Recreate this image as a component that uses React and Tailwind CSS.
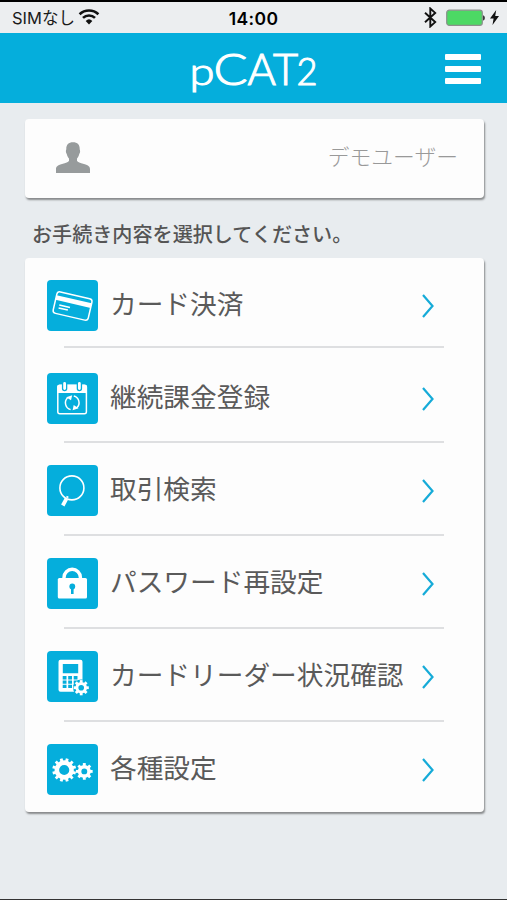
import { Fragment } from 'react'

const bigTeeth = [15, 45, 75, 105, 135, 165, 195, 225, 255, 285, 315, 345]
const smallTeeth = [0, 45, 90, 135, 180, 225, 270, 315]

function Gear({ cx, cy, r, width, teeth, toothWidth, toothLength }) {
  return (
    <g transform={`translate(${cx} ${cy})`}>
      <circle r={r} fill="none" stroke="#fff" strokeWidth={width} />
      {teeth.map((angle) => (
        <rect
          key={angle}
          x={-toothWidth / 2}
          y={-(r + width / 2 + toothLength)}
          width={toothWidth}
          height={toothLength + 0.8}
          fill="#fff"
          transform={`rotate(${angle})`}
        />
      ))}
    </g>
  )
}

function CardIcon() {
  return (
    <g transform="rotate(13 25.5 25.5)">
      <rect x="7.7" y="15" width="36" height="22" rx="3" fill="none" stroke="#fff" strokeWidth="1.5" />
      <path d="M7.7 19h36v4.8h-36z" fill="#fff" />
      <path d="M12.5 28h11M12.5 31h9.5" stroke="#fff" strokeWidth="1.5" />
    </g>
  )
}

function CalendarIcon() {
  return (
    <>
      <rect x="10.8" y="12.3" width="28.6" height="28.4" rx="2" fill="none" stroke="#fff" strokeWidth="1.5" />
      <path d="M10.2 14a2.3 2.3 0 0 1 2.3-2.3h25.2A2.3 2.3 0 0 1 40 14v6H10.2z" fill="#fff" />
      <path d="M17.6 11v4.6M32.4 11v4.6" stroke="#05aedc" strokeWidth="5.4" strokeLinecap="round" />
      <path d="M17.6 10.5v5M32.4 10.5v5" stroke="#fff" strokeWidth="2.8" strokeLinecap="round" />
      <path d="M23.6 36.6a7 7 0 0 1-3-11.8M26.8 22.9a7 7 0 0 1 3.2 11.7" fill="none" stroke="#fff" strokeWidth="1.5" />
      <path d="M19.2 24.2l6-2-1.2 5zM31.6 35.2l-6 2 1.1-5.1z" fill="#fff" />
    </>
  )
}

function SearchIcon() {
  return (
    <>
      <circle cx="24.9" cy="22.9" r="12" fill="none" stroke="#fff" strokeWidth="1.6" />
      <path d="M19.4 33.8l-3.6 6.7" stroke="#fff" strokeWidth="3.8" />
      <path d="M20 32.7l.8-1.5" stroke="#fff" strokeWidth="2.2" />
    </>
  )
}

function LockIcon() {
  return (
    <>
      <path d="M17 21v-1.5a8.2 8.2 0 0 1 16.4 0V21" fill="none" stroke="#fff" strokeWidth="3.4" />
      <rect x="10.8" y="20" width="29.2" height="20.6" rx="1.6" fill="#fff" />
      <circle cx="25.3" cy="28.5" r="2.9" fill="#05aedc" />
      <path d="M25.3 29v7" stroke="#05aedc" strokeWidth="2.6" />
    </>
  )
}

function ReaderIcon() {
  return (
    <>
      <path
        fillRule="evenodd"
        d="M13.5 8.8h20a2 2 0 0 1 2 2v30h-22a2 2 0 0 1-2-2v-28a2 2 0 0 1 2-2zM15.8 13v9.2h15.4V13z"
        fill="#fff"
      />
      {[25.1, 29.4, 33.7].map((y) => (
        <path key={y} d={`M15.7 ${y}h3.8v3.3h-3.8zM21.2 ${y}h3.8v3.3h-3.8zM26.7 ${y}h3.8v3.3h-3.8z`} fill="#05aedc" />
      ))}
      <circle cx="34.2" cy="36.7" r="8.2" fill="#05aedc" />
      <Gear cx={34.2} cy={36.7} r={4.3} width={3} teeth={smallTeeth} toothWidth={2.8} toothLength={1.8} />
    </>
  )
}

function SettingsIcon() {
  return (
    <>
      <Gear cx={17.2} cy={26} r={7.4} width={4.6} teeth={bigTeeth} toothWidth={2.9} toothLength={2.2} />
      <Gear cx={37.3} cy={27.4} r={4.7} width={3.5} teeth={smallTeeth} toothWidth={2.9} toothLength={1.9} />
    </>
  )
}

const menu = [
  { label: 'カード決済', Icon: CardIcon, line: 'mt-[15px] mb-[25px]' },
  { label: '継続課金登録', Icon: CalendarIcon, line: 'mt-[17px] mb-[22px]' },
  { label: '取引検索', Icon: SearchIcon, line: 'mt-[18px] mb-[22px]' },
  { label: 'パスワード再設定', Icon: LockIcon, line: 'mt-[18px] mb-[22px]' },
  { label: 'カードリーダー状況確認', Icon: ReaderIcon, line: 'mt-[18px] mb-[22px]' },
  { label: '各種設定', Icon: SettingsIcon },
]

function StatusBar() {
  return (
    <div className="grid h-[33px] grid-cols-3 items-center border-t-2 border-black bg-[#eceef0] pr-2 pl-3 text-[#1a1a1a]">
      <div className="flex items-center gap-[3px] pt-px">
        <span className="text-[16.5px] leading-none whitespace-nowrap">
          <span className="font-['Inter']">SIM</span>なし
        </span>
        <svg width="22" height="17" viewBox="0 0 22 17" className="-mt-1">
          <path d="M1.6 6.3a13.5 13.5 0 0 1 18.8 0M5 9.9a8.6 8.6 0 0 1 12 0" fill="none" stroke="#111" strokeWidth="2.6" />
          <path d="M11 16.4l-3.3-3.5a4.8 4.8 0 0 1 6.6 0z" fill="#111" />
        </svg>
      </div>
      <div className="-ml-1 pt-[3px] text-center font-['Inter'] text-[17.5px] leading-none font-semibold tracking-[0.4px] text-black">
        14:00
      </div>
      <div className="flex items-center justify-end">
        <svg width="13" height="21" viewBox="0 0 13 21" className="mr-[9px]">
          <path d="M1 5.8l10.2 9.3L6.3 19.5V1.5l4.9 4.4L1 15.2" fill="none" stroke="#111" strokeWidth="1.9" />
        </svg>
        <svg width="40" height="18" viewBox="0 0 40 18">
          <rect x=".7" y="1.2" width="35.6" height="15.2" rx="2.6" fill="#4cd964" stroke="#8b908c" strokeWidth="1.2" />
          <path d="M37.2 6.2c2 .6 2 4.8 0 5.4z" fill="#111" />
        </svg>
        <svg width="9" height="15" viewBox="0 0 9 15" className="ml-[4px]">
          <path d="M6.2 0L0 8.5h3.6L2.5 15 9 6H5.2z" fill="#111" />
        </svg>
      </div>
    </div>
  )
}

function Header() {
  return (
    <header className="flex h-[70px] items-center justify-between bg-[#05aedc] pr-[26px] pl-[185px]">
      <svg
        width="140"
        height="66"
        viewBox="0 0 140 66"
        className="font-['Lato'] font-light"
        fill="#fff"
        stroke="#fff"
        strokeWidth="1.1"
      >
        <text x="4.5" y="49.5" fontSize="38" textLength="25" lengthAdjust="spacingAndGlyphs">p</text>
        <text x="28.5" y="49.5" fontSize="43.5" textLength="34" lengthAdjust="spacingAndGlyphs">C</text>
        <text x="62.5" y="49.5" fontSize="43.5" textLength="50.5" lengthAdjust="spacingAndGlyphs">AT</text>
        <text x="111.5" y="49.5" fontSize="38" textLength="21" lengthAdjust="spacingAndGlyphs">2</text>
      </svg>
      <div className="mt-px flex flex-col gap-[6px]">
        <div className="h-[6px] w-9 rounded-[1px] bg-white" />
        <div className="h-[6px] w-9 rounded-[1px] bg-white" />
        <div className="h-[6px] w-9 rounded-[1px] bg-white" />
      </div>
    </header>
  )
}

function App() {
  return (
    <div className="h-[900px] w-[507px] overflow-hidden border-b border-[#333] bg-[#e8ecef] font-['Noto_Sans_CJK_JP',sans-serif]">
      <StatusBar />
      <Header />

      <main className="pr-[23px] pl-[25px]">
        <div className="mt-4 flex h-[79px] items-center justify-between rounded-[4px] bg-[#fdfdfd] pr-[26px] pl-[31px] shadow-[1px_2px_2px_rgba(0,0,0,0.42)]">
          <svg width="34" height="31" viewBox="0 0 34 31" className="-mt-0.5">
            <path
              d="M17 .2c4.500 0 6.800 2.600 6.700 6.700 0 1 .5 1.100.4 2.700-.1 1.500-.7 1.900-1 2.900-.4 1.900-1.200 3-2.100 4v2.200c.7 1.500 3 2 7 3.300 4.600 1.400 6 2.700 6 5.200V31H0v-3.800c0-2.500 1.400-3.800 6-5.200 4-1.300 6.300-1.800 7-3.300v-2.200c-.9-1-1.700-2.100-2.100-4-.3-1-.9-1.400-1-2.900-.1-1.600.4-1.700.4-2.700C10.200 2.800 12.500.2 17 .2z"
              fill="#979b9c"
            />
          </svg>
          <span className="pb-[5px] text-[21.8px] leading-none font-light text-[#999]">デモユーザー</span>
        </div>

        <h1 className="mt-[25px] ml-[7px] h-[35px] text-[20.1px] leading-[22px] font-medium whitespace-nowrap text-[#555]">
          お手続き内容を選択してください。
        </h1>

        <div className="h-[554px] rounded-[4px] bg-[#fdfdfd] pt-[22px] pl-[22px] shadow-[1px_2px_2px_rgba(0,0,0,0.42)]">
          {menu.map(({ label, Icon, line }) => (
            <Fragment key={label}>
              <div className="flex h-[51px] items-center">
                <svg width="51" height="51" viewBox="0 0 51 51" className="shrink-0 rounded-[4px] bg-[#05aedc]">
                  <Icon />
                </svg>
                <span className="ml-3 flex-1 pb-[5px] text-[26.7px] leading-none whitespace-nowrap text-[#5a5a5a]">
                  {label}
                </span>
                <svg width="12" height="24" viewBox="0 0 12 24" className="mr-[50px]">
                  <path d="M1 1l9.5 11L1 23" fill="none" stroke="#16abd8" strokeWidth="2.2" />
                </svg>
              </div>
              {line && <div className={`ml-[17px] h-[2px] w-[380px] bg-[#dedfe1] ${line}`} />}
            </Fragment>
          ))}
        </div>
      </main>
    </div>
  )
}

export default App
